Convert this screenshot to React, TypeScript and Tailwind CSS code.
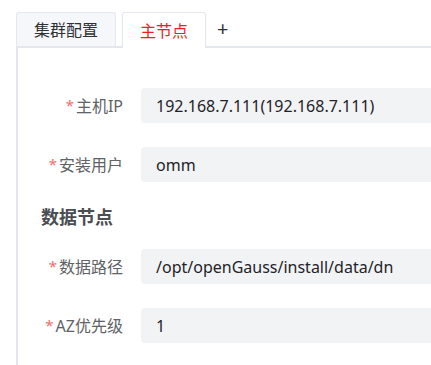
import React from 'react';

type Field = { label: string; value: string };

const hostFields: Field[] = [
  { label: '主机IP', value: '192.168.7.111(192.168.7.111)' },
  { label: '安装用户', value: 'omm' },
];

const dataFields: Field[] = [
  { label: '数据路径', value: '/opt/openGauss/install/data/dn' },
  { label: 'AZ优先级', value: '1' },
];

function FormRow({ label, value }: Field) {
  return (
    <div className="flex items-center h-[35px] mb-[24px]">
      <div className="w-[123px] pr-[18px] flex justify-end items-center text-[16px] text-[#606266]">
        <span className="text-[#f56c6c] text-[15px] mr-[2px]">*</span>
        {label}
      </div>
      <div className="w-[320px] h-[35px] shrink-0 bg-[#f2f3f5] rounded-[4px] pl-[15px] flex items-center text-[16px] text-[#1f2329]">
        {value}
      </div>
    </div>
  );
}

export default function App() {
  return (
    <div
      className="w-[431px] h-[365px] overflow-hidden bg-white pl-4 pt-3"
      style={{ fontFamily: '"Noto Sans", "Noto Sans CJK SC", sans-serif' }}
    >
      {/* Tabs */}
      <div className="flex items-end border-b-2 border-[#e4e7ed] w-[500px]">
        <div className="h-[34px] px-[17px] flex items-center bg-[#f5f7fa] border border-b-0 border-[#e4e7ed] rounded-t-[3px] text-[16px] text-[#303133]">
          集群配置
        </div>
        <div className="h-[36px] -mb-[2px] ml-[6px] px-[17px] flex items-center bg-white border border-b-0 border-[#e4e7ed] rounded-t-[3px] text-[16px] text-[#ee1d23]">
          主节点
        </div>
        <div className="h-[34px] ml-[11px] flex items-center text-[20px] text-[#303133]">+</div>
      </div>

      {/* Content */}
      <div className="border-l-2 border-[#e4e7ed] pt-[40px] pb-10 w-[500px]">
        {hostFields.map((f) => (
          <FormRow key={f.label} {...f} />
        ))}
        <div className="h-[22px] mb-[21px] pl-[23px] flex items-center text-[18px] font-bold text-[#4a4d52]">
          数据节点
        </div>
        {dataFields.map((f) => (
          <FormRow key={f.label} {...f} />
        ))}
      </div>
    </div>
  );
}
